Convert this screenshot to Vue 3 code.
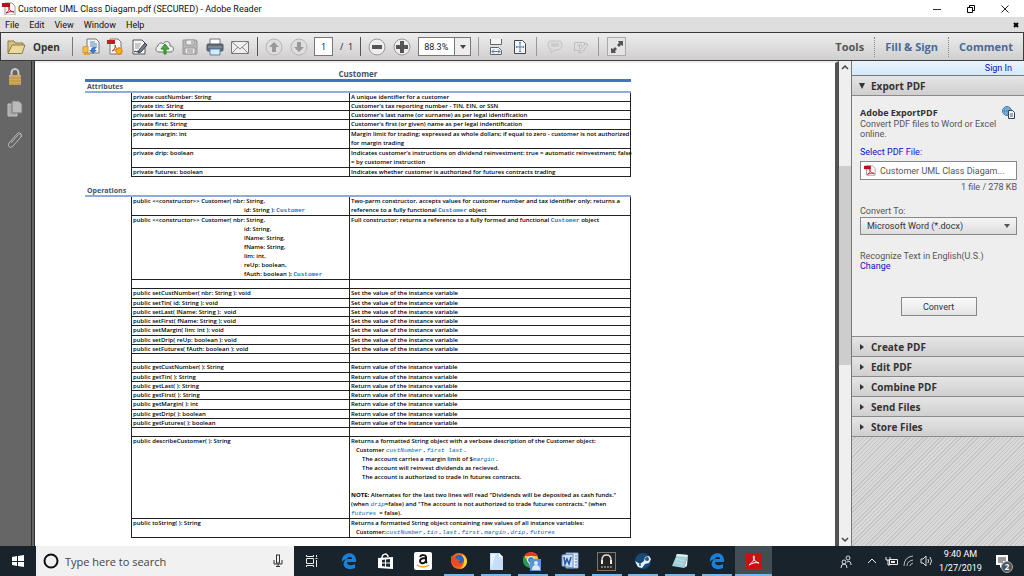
<script setup>
const menus = ['File', 'Edit', 'View', 'Window', 'Help']
const t = (text) => [{ text }]
const code = (text) => ({ text, kind: 'code' })
const v = (text) => ({ text, kind: 'var' })
const p = (text) => ({ text })

const attributes = [
  ['private custNumber: String', ['A unique identifier for a customer']],
  ['private tin: String', ["Customer's tax reporting number - TIN, EIN, or SSN"]],
  ['private last: String', ["Customer's last name (or surname) as per legal identification"]],
  ['private first: String', ["Customer's first (or given) name as per legal indentification"]],
  ['private margin: int', ['Margin limit for trading; expressed as whole dollars; if equal to zero - customer is not authorized', 'for margin trading']],
  ['private drip: boolean', ["Indicates customer's instructions on dividend reinvestment: true = automatic reinvestment; false", '= by customer instruction']],
  ['private futures: boolean', ['Indicates whether customer is authorized for futures contracts trading']]
]

const setters = ['setCustNumber( nbr: String ): void', 'setTin( id: String ): void', 'setLast( lName: String ):  void', 'setFirst( fName: String ): void', 'setMargin( lim: int ): void', 'setDrip( reUp: boolean ): void', 'setFutures( fAuth: boolean ): void']
const getters = ['getCustNumber( ): String', 'getTin( ): String', 'getLast( ): String', 'getFirst( ): String', 'getMargin( ): int', 'getDrip( ): boolean', 'getFutures( ): boolean']
const line = (parts, indent = 0) => ({ parts, indent })
const blank = { left: [line(t('\u00a0'))], right: [line(t('\u00a0'))] }

const operations = [
  {
    left: [line(t('public <<constructor>> Customer( nbr: String,')), line([p('id: String ): '), code('Customer')], 4)],
    right: [
      line(t('Two-parm constructor, accepts values for customer number and tax identifier only; returns a')),
      line([p('reference to a fully functional '), code('Customer'), p(' object')])
    ]
  },
  {
    left: [
      line(t('public <<constructor>> Customer( nbr: String,')),
      line(t('id: String,'), 4), line(t('lName: String,'), 4), line(t('fName: String,'), 4),
      line(t('lim: int,'), 4), line(t('reUp: boolean,'), 4),
      line([p('fAuth: boolean ): '), code('Customer')], 4)
    ],
    right: [line([p('Full constructor; returns a reference to a fully formed and functional '), code('Customer'), p(' object')])]
  },
  blank,
  ...setters.map((s) => ({ left: [line(t('public ' + s))], right: [line(t('Set the value of the instance variable'))] })),
  blank,
  ...getters.map((s) => ({ left: [line(t('public ' + s))], right: [line(t('Return value of the instance variable'))] })),
  blank,
  {
    left: [line(t('public describeCustomer( ): String'))],
    right: [
      line(t('Returns a formatted String object with a verbose description of the Customer object:')),
      line([p('Customer '), v('custNumber'), p(' , '), v('first last'), p(' .')], 1),
      line([p('The account carries a margin limit of $'), v('margin'), p(' .')], 2),
      line(t('The account will reinvest dividends as recieved.'), 2),
      line(t('The account is authorized to trade in futures contracts.'), 2),
      line(t('\u00a0')),
      line([{ text: 'NOTE:', kind: 'note' }, p(' Alternates for the last two lines will read "Dividends will be deposited as cash funds."')]),
      line([p('(when '), v('drip'), p('=false) and "The account is not authorized to trade futures contracts." (when')]),
      line([v('futures'), p('  = false).')])
    ]
  },
  {
    left: [line(t('public toString( ): String'))],
    right: [
      line(t('Returns a formatted String object containing raw values of all instance variables:')),
      line([p('Customer:'), v('custNumber'), p(' , '), v('tin'), p(' , '), v('last'), p(' , '), v('first'), p(' , '), v('margin'), p(' , '), v('drip'), p(' , '), v('futures')], 1)
    ]
  }
]

const tables = [
  { title: 'Attributes', rows: attributes.map(([l, r]) => ({ left: [line(t(l))], right: r.map((x) => line(t(x))) })) },
  { title: 'Operations', rows: operations }
]
const single = (row) => row.left.length === 1 && row.right.length === 1
const sections = ['Create PDF', 'Edit PDF', 'Combine PDF', 'Send Files', 'Store Files']
</script>

<template>
  <div class="desktop">
    <header class="title-bar">
      <svg class="pdf-icon" width="14" height="13" viewBox="0 0 14 13"><path d="M3 1h7l3 3v9H3z" fill="#fff" stroke="#999" /><path d="M0 1h8v4H0z" fill="#b5121b" /><path d="M4 11c3-2 4-5 3-6s-1 4 5 5c-3-1-5 0-8 1z" fill="none" stroke="#c4161c" /></svg>
      <h1>Customer UML Class Diagam.pdf (SECURED) - Adobe Reader</h1>
      <div class="win-buttons">
        <button aria-label="Minimize"><svg width="10" height="10"><path d="M1 5.500h8" stroke="#333" /></svg></button>
        <button aria-label="Restore"><svg width="10" height="10" fill="none" stroke="#000"><path d="M1.500 3.500h5v5h-5zM3.500 3V1.500h5v5H7" /></svg></button>
        <button aria-label="Close"><svg width="10" height="10" fill="none" stroke="#222"><path d="M1.500 1.500l7 7m0-7l-7 7" /></svg></button>
      </div>
    </header>

    <nav class="menu-bar">
      <button v-for="m in menus" :key="m">{{ m }}</button>
      <button class="close-doc" aria-label="Close document"><svg width="6" height="6"><path d="M1 1l4 4m0-4l-4 4" stroke="#000" stroke-width="2" /></svg></button>
    </nav>

    <div class="toolbar">
      <button class="open">
        <svg width="20" height="16" viewBox="0 0 20 16"><path d="M1 14V2h6l1 2h8v3" fill="#d9c486" stroke="#8d7b43" /><path d="M1 14.500L5 6h13l-3 8.500z" fill="#ecd99c" stroke="#8d7b43" /></svg>
        <span>Open</span>
      </button>
      <i class="sep first"></i>
      <div class="tools">
        <button aria-label="Convert file"><svg width="18" height="18" viewBox="0 0 18 18"><path d="M5 1h9l3 3v11H5z" fill="#f4f6f8" stroke="#777" /><path d="M8 4h5M8 6h7M8 8h7" stroke="#5b82b8" /><path d="M12 9c-2 0-3 1-3 3H7l4 4 4-4h-2c0-1 1-3 3-3z" fill="#3d79c4" /><path d="M1 9l5-1v6l-5 1z" fill="#f5c04b" stroke="#d9942b" /><path d="M2 16h6" stroke="#e3a334" stroke-width="2" /></svg></button>
        <button aria-label="Create PDF"><svg width="18" height="18" viewBox="0 0 18 18"><path d="M4 1h8l3 3v12H4z" fill="#f6f6f6" stroke="#777" /><path d="M1 2h8v4H1z" fill="#d0161f" /><path d="M6 13c3-2 4-5 3-6 0 3 2 4 5 4-3 0-6 1-8 2z" fill="none" stroke="#c8413f" /><path d="M13 9l1 2 2-1-1 2 2 1-2 1 1 2-2-1-1 2-1-2-2 1 1-2-2-1 2-1-1-2 2 1z" fill="#f5b324" stroke="#da901b" /></svg></button>
        <button aria-label="Edit"><svg width="18" height="18" viewBox="0 0 18 18"><path d="M2 2h9l3 3v11H2z" fill="#f7f7f7" stroke="#555" /><path d="M4 6h6M4 8h5M4 10h4" stroke="#999" /><path d="M14 5l2 2-6 7-3 1 1-3z" fill="#71808f" stroke="#37414c" /><path d="M3 14c2-2 2 1 4-1" fill="none" stroke="#222" /></svg></button>
        <button aria-label="Upload"><svg width="20" height="18" viewBox="0 0 20 18"><path d="M4 14c-4 0-4-5-1-6 0-3 4-4 5-2 2-4 8-3 7 2 5 0 4 6 1 6z" fill="#eee" stroke="#737373" /><path d="M10 6l4 5h-3v5H9v-5H6z" fill="#49ae39" stroke="#2f842b" /></svg></button>
        <button aria-label="Save"><svg width="18" height="18" viewBox="0 0 18 18"><path d="M2 2h13l1 1v13H2z" fill="#b9b9b9" stroke="#969696" /><path d="M5 2h8v5H5zM4 10h10v6H4z" fill="#ececec" stroke="#999" /><path d="M11 3v3M6 12h6M6 14h6" stroke="#888" /></svg></button>
        <button aria-label="Print"><svg width="18" height="18" viewBox="0 0 18 18"><path d="M4 1h10v7H4z" fill="#fff" stroke="#777" /><rect x="1" y="6" width="16" height="7" rx="1" fill="#626a74" stroke="#505860" /><path d="M2 9h14" stroke="#9aa6b4" /><path d="M4 11h10v6H4z" fill="#d5eaff" stroke="#5283b5" /></svg></button>
        <button aria-label="Mail"><svg width="20" height="18" viewBox="0 0 20 18"><path d="M1.500 3.500h17v12h-17z" fill="#eee" stroke="#777" /><path d="M2 4l8 7 8-7M2 15l6-6m10 6l-6-6" fill="none" stroke="#888" /></svg></button>
      </div>
      <i class="sep dark"></i>
      <button class="round" aria-label="Previous page"><svg width="18" height="18"><circle cx="9" cy="9" r="8" fill="#dedede" stroke="#b5b5b5" /><path d="M9 4l5 5h-3v5H7V9H4z" fill="#999" /></svg></button>
      <button class="round" aria-label="Next page"><svg width="18" height="18"><circle cx="9" cy="9" r="8" fill="#dedede" stroke="#b5b5b5" /><path d="M9 14l5-5h-3V4H7v5H4z" fill="#999" /></svg></button>
      <label class="page-no"><input aria-label="Page" value="1" /><span>/&nbsp;&nbsp;1</span></label>
      <i class="sep dark"></i>
      <button class="round" aria-label="Zoom out"><svg width="18" height="18"><circle cx="9" cy="9" r="8" fill="#eee" stroke="#999" /><path d="M4 7h10v4H4z" fill="#555" /></svg></button>
      <button class="round" aria-label="Zoom in"><svg width="18" height="18"><circle cx="9" cy="9" r="8" fill="#eee" stroke="#999" /><path d="M7 3h4v4h4v4h-4v4H7v-4H3V7h4z" fill="#555" /></svg></button>
      <div class="zoom">
        <input aria-label="Zoom level" value="88.3%" />
        <button aria-label="Zoom levels"><svg width="6" height="4"><path d="M0 0h6L3 4z" fill="#444" /></svg></button>
      </div>
      <i class="sep"></i>
      <button class="fit" aria-label="Fit width"><svg width="14" height="16" viewBox="0 0 14 16"><path d="M1.500 0v5.500h11V0M1.500 15.500v-7h8l3 3v4z" fill="#f5f5f5" stroke="#666" /><path d="M3 12.500h8M5 10.500l-2 2 2 2m4-4l2 2-2 2" fill="none" stroke="#5578b5" /></svg></button>
      <button class="fit" aria-label="Fit page"><svg width="14" height="16" viewBox="0 0 14 16"><path d="M1.500 1.500h8l3 3v10h-11z" fill="#f5f5f5" stroke="#444" /><path d="M7 3v10M3 8h8M6 4l1-1 1 1M6 12l1 1 1-1M4 7L3 8l1 1m6-2l1 1-1 1" fill="none" stroke="#5b7fb9" /></svg></button>
      <i class="sep"></i>
      <button class="fit" aria-label="Add note"><svg width="16" height="14" viewBox="0 0 16 14"><path d="M3 1h10q2 0 2 4t-5 5H7l-3 3V9Q1 9 1 5t2-4z" fill="#ddd" stroke="#c2c2c2" /><path d="M4 4h8M4 6h8" stroke="#bbb" /></svg></button>
      <button class="fit" aria-label="Highlight text"><svg width="16" height="14" viewBox="0 0 16 14"><path d="M1.500 2.500h10v8h-10zM4 5h5M6.500 5v4" fill="none" stroke="#bebebe" /><path d="M13 3l2 2-6 7-3 1 1-3z" fill="#ddd" stroke="#bbb" /></svg></button>
      <i class="sep"></i>
      <button class="expand" aria-label="Read mode"><svg width="14" height="14" viewBox="0 0 14 14"><path d="M8 1h5v5l-2-1-2 2-2-2 2-2zM1 8l2 1 2-2 2 2-2 2 1 2H1z" fill="#555" /></svg></button>
      <div class="task-tabs">
        <button class="active">Tools</button><button>Fill &amp; Sign</button><button>Comment</button>
      </div>
    </div>

    <div class="workspace">
      <aside class="nav-pane">
        <button aria-label="Security settings"><svg width="14" height="18" viewBox="0 0 14 18"><path d="M3.500 9V5a3.500 4 0 0 1 7 0v4" fill="none" stroke="#ccc" stroke-width="2" /><rect x="1" y="7" width="12" height="10" fill="#d3aa5d" /><path d="M1 10h12M1 13h12M1 16h12" stroke="#b38f4c" /></svg></button>
        <button aria-label="Page thumbnails"><svg width="16" height="17" viewBox="0 0 16 17"><path d="M1 4h9v12H1z" fill="#aaa" stroke="#c4c4c4" /><path d="M5 1h7l3 3v9H5z" fill="#bababa" stroke="#777" /></svg></button>
        <button aria-label="Attachments"><svg width="16" height="18" viewBox="0 0 16 18"><path d="M4 12l7-8c2-2 4 0 3 2l-8 9c-3 3-6 0-4-3l8-9c2-3 6 0 4 3" fill="none" stroke="#b9b9b9" /></svg></button>
      </aside>

      <main class="document">
        <article class="sheet">
          <h2>Customer</h2>
          <section v-for="tb in tables" :key="tb.title" :class="tb.title.toLowerCase()">
            <h3>{{ tb.title }}</h3>
            <table>
              <colgroup><col class="c1" /><col /></colgroup>
              <tbody>
                <tr v-for="(row, i) in tb.rows" :key="i" :class="{ single: single(row) }">
                  <td v-for="(cell, j) in [row.left, row.right]" :key="j">
                    <div v-for="(ln, k) in cell" :key="k" :class="'in' + ln.indent"><span v-for="(part, n) in ln.parts" :key="n" :class="part.kind">{{ part.text }}</span></div>
                  </td>
                </tr>
              </tbody>
            </table>
          </section>
        </article>
      </main>

      <div class="scrollbar">
        <svg width="12" height="14"><path d="M3 8l3-3 3 3" fill="none" stroke="#444" stroke-width="1.500" /></svg>
        <div class="thumb"></div>
        <svg width="12" height="14"><path d="M3 6l3 3 3-3" fill="none" stroke="#444" stroke-width="1.500" /></svg>
      </div>

      <aside class="side">
        <div class="sign-in"><a href="#">Sign In</a></div>
        <button class="acc"><svg width="6" height="6"><path d="M0 0h6L3 6z" fill="#333" /></svg>Export PDF</button>
        <form class="export" @submit.prevent>
          <div class="export-head">
            <h4>Adobe ExportPDF</h4>
            <svg width="13" height="13" viewBox="0 0 13 13"><circle cx="5" cy="5" r="4.500" fill="#9cc6e8" stroke="#3a79ae" /><path d="M1 5h8M5 1v8M3 2q-1 3 0 6M7 2q1 3 0 6" fill="none" stroke="#4d88b8" /><path d="M6.500 4.500h4l2 2v6h-6z" fill="#f4f4f4" stroke="#345" /><path d="M8 8h3M8 10h3" stroke="#346da5" /></svg>
          </div>
          <p>Convert PDF files to Word or Excel<br />online.</p>
          <a class="select-file" href="#">Select PDF File:</a>
          <div class="file">
            <svg width="12" height="13" viewBox="0 0 14 13"><path d="M3 1h7l3 3v8H3z" fill="#fff" stroke="#999" /><path d="M0 1h8v4H0z" fill="#b5121b" /><path d="M4 11c3-2 4-5 3-6s-1 4 5 5c-3-1-5 0-8 1z" fill="none" stroke="#c4161c" /></svg>
            <span>Customer UML Class Diagam...</span>
          </div>
          <div class="size">1 file / 278 KB</div>
          <label for="fmt">Convert To:</label>
          <div class="select-wrap">
            <select id="fmt"><option>Microsoft Word (*.docx)</option></select>
            <svg width="6" height="4"><path d="M0 0h6L3 4z" fill="#555" /></svg>
          </div>
          <div class="ocr">Recognize Text in English(U.S.)<br /><a href="#">Change</a></div>
          <button class="convert">Convert</button>
        </form>
        <button v-for="s in sections" :key="s" class="acc"><svg width="6" height="6"><path d="M1 0v6l4-3z" fill="#333" /></svg>{{ s }}</button>
        <div class="hatch"></div>
      </aside>
    </div>

    <footer class="taskbar">
      <button class="start" aria-label="Start"><svg width="12" height="12" viewBox="0 0 12 12"><path d="M0 2l5-1v5H0zM6 1l6-1v6H6zM0 7h5v4l-5-1zM6 7h6v5l-6-1z" fill="#fff" /></svg></button>
      <label class="search">
        <svg width="16" height="16"><circle cx="8" cy="8" r="6.500" fill="none" stroke="#111" stroke-width="2" /></svg>
        <input placeholder="Type here to search" aria-label="Search" />
        <svg width="10" height="14" viewBox="0 0 10 14"><rect x="3.500" y="1" width="3" height="8" fill="none" stroke="#333" /><path d="M1 6v4h8V6M5 10v3M3 12.500h4" fill="none" stroke="#333" /></svg>
      </label>
      <div class="apps">
        <button aria-label="Task view"><svg width="14" height="14" viewBox="0 0 14 14"><path d="M1.500 1v1.500h7V1M1.500 4.500h7v5h-7zM1.500 13v-1.500h7V13M11.500 1v2m0 3v7M10.500 4.500h2" fill="none" stroke="#eee" /></svg></button>
        <button aria-label="Edge"><svg width="16" height="16" viewBox="0 0 16 16"><path d="M1 7C2-2 15-2 15 7v2H6c0 4 5 4 8 2v4C7 18 1 14 3 9c1-2 2-3 4-3-1 0-4 0-6 3zM6 6h5c0-3-4-3-5 0z" fill="#1681dc" /></svg></button>
        <button aria-label="Store"><svg width="17" height="17" viewBox="0 0 17 17"><path d="M1 5l15-1v12l-15-1z" fill="#fff" /><path d="M5 5c0-5 6-5 6-1" fill="none" stroke="#fff" stroke-width="1.500" /><path d="M5 7l3-.500v3H5zM9 6.500l4-.500v3.500H9zM5 10.500h3v3l-3-.500zM9 10.500h4V14l-4-.500z" fill="#1a2730" /></svg></button>
        <button aria-label="Amazon"><svg width="18" height="18" viewBox="0 0 18 18"><rect width="18" height="18" rx="2" fill="#fff" /><path d="M6 5c1-3 6-2 6 0v5l1 1M12 6c-4 0-6 1-6 3s3 4 6 0" fill="none" stroke="#111" stroke-width="2" /><path d="M3 13q6 4 12 0" fill="none" stroke="#f39a1e" stroke-width="1.500" /></svg></button>
        <button class="run" aria-label="Firefox"><svg width="18" height="18" viewBox="0 0 18 18"><circle cx="9" cy="9" r="8" fill="#f36b21" /><path d="M12 2q5 3 5 8-1 6-7 7 5-4 3-8z" fill="#ffcf32" /><circle cx="9" cy="8" r="5" fill="#2862c3" /><path d="M1 4c3 0 5 1 6 3l3 1-2 2c2 2 4 1 6-1-1 7-11 8-13 0z" fill="#ee4a22" /></svg></button>
        <button class="run" aria-label="Document"><svg width="14" height="17" viewBox="0 0 14 17"><path d="M1 0h9l4 4v13H1z" fill="#c4ddf8" /><path d="M10 0v4h4z" fill="#fff" /><path d="M2 16V1h5z" fill="#e4f1ff" /></svg></button>
        <button class="run" aria-label="Chrome"><svg width="19" height="19" viewBox="0 0 19 19"><circle cx="8" cy="8" r="7.500" fill="#f2c32e" /><path d="M1 4a8 8 0 0 1 14 0H8z" fill="#df3c31" /><path d="M1 4l5 7 1 5A8 8 0 0 1 1 4z" fill="#269b50" /><circle cx="8" cy="8" r="3.500" fill="#3c78d6" stroke="#fff" /><path d="M7 7h11v12H7z" fill="#5d91d8" /><circle cx="13" cy="11" r="2" fill="#d9e8fb" /><path d="M9 18q0-5 4-5t4 5z" fill="#d9e8fb" /></svg></button>
        <button class="run" aria-label="Word"><svg width="18" height="18" viewBox="0 0 18 18"><path d="M5 1h12v15H5z" fill="#e8f0fb" stroke="#8aa8d0" /><path d="M14 4h2m-2 3h2m-2 3h2m-2 3h2" stroke="#386fba" /><path d="M1 3l11-1v14L1 14z" fill="#cfdff4" stroke="#5f8ac6" /><path d="M3 5l1 7 2-5 2 5 2-7" fill="none" stroke="#2457a5" stroke-width="1.500" /></svg></button>
        <button class="run" aria-label="Headphones"><svg width="19" height="19" viewBox="0 0 19 19"><rect x=".5" y=".5" width="18" height="18" fill="#252525" stroke="#777" /><path d="M5 12V8q0-5 4.500-5T14 8v4" fill="none" stroke="#ddd" stroke-width="1.500" /><path d="M4 8h2v4H4zM13 8h2v4h-2z" fill="#eee" /><path d="M4 15h11" stroke="#ccc" stroke-dasharray="2 1" /></svg></button>
        <button class="run" aria-label="Steam"><svg width="18" height="18" viewBox="0 0 18 18"><circle cx="9" cy="9" r="8" fill="#174a79" /><path d="M1 9l5 3 4-3 1-4 4-1 2 3-2 4-4 1-3 4-4-1z" fill="#e9f1f8" /><circle cx="13" cy="7" r="2" fill="#245783" /><circle cx="6" cy="13" r="1" fill="#245783" /></svg></button>
        <button class="run" aria-label="Notepad"><svg width="18" height="18" viewBox="0 0 18 18"><path d="M6 2l11 1-4 13-12-2z" fill="#9fd1d9" /><path d="M17 3l-1 11-3 2z" fill="#eee" /><path d="M6 2l11 1-1 2L5 4z" fill="#e5eeee" /><path d="M5 7l8 2M4 10l8 2" stroke="#bde2e7" /></svg></button>
        <button class="run" aria-label="Edge window"><svg width="16" height="16" viewBox="0 0 16 16"><path d="M1 7C2-2 15-2 15 7v2H6c0 4 5 4 8 2v4C7 18 1 14 3 9c1-2 2-3 4-3-1 0-4 0-6 3zM6 6h5c0-3-4-3-5 0z" fill="#1681dc" /></svg></button>
        <button class="run current" aria-label="Adobe Reader"><svg width="16" height="16" viewBox="0 0 16 16"><path d="M0 0h16v16H0z" fill="#c9110f" /><path d="M3 12c5-3 6-8 5-9s-2 5 5 7c-3-1-7 0-10 2z" fill="none" stroke="#fff" /></svg></button>
      </div>
      <div class="tray">
        <svg width="12" height="13" viewBox="0 0 12 13" fill="none" stroke="#ddd"><circle cx="8" cy="3" r="2" /><circle cx="4" cy="7" r="2" /><path d="M1 13q0-4 3-4t3 4M7 7q4-2 4 3" /></svg>
        <svg class="chev" width="10" height="8"><path d="M1 6l4-4 4 4" fill="none" stroke="#eee" /></svg>
        <svg width="13" height="11" viewBox="0 0 13 11"><path d="M4.500 3.500h8v5h-8z" fill="none" stroke="#eee" /><path d="M1 1v3h4V1M3 4v5h2" fill="none" stroke="#eee" /><path d="M6 5h4v2H6z" fill="#eee" /></svg>
        <svg width="12" height="12" viewBox="0 0 12 12" fill="none" stroke="#bbb"><path d="M1 11Q1 2 10 1M4 11q0-5 6-6M7 11q0-2 3-3" /></svg>
        <svg width="12" height="12" viewBox="0 0 12 12" fill="none" stroke="#ddd"><path d="M1 4h2l3-3v10L3 8H1zM8 4q1 2 0 4M10 2q3 4 0 8" /></svg>
      </div>
      <div class="clock">9:40 AM<br />1/27/2019</div>
      <button class="notif" aria-label="Notifications"><svg width="14" height="14" viewBox="0 0 14 14"><path d="M1 1h12v10H8l-3 3v-3H1z" fill="#fff" /><path d="M3 4h8M3 6h8M3 8h5" stroke="#333" /></svg><b>2</b></button>
    </footer>
  </div>
</template>

<style>
body { overflow: hidden; }
</style>

<style scoped>
* { box-sizing: border-box; }
.desktop { display: flex; flex-direction: column; height: 100vh; overflow: hidden; font-family: "Open Sans", "Noto Sans", sans-serif; font-size: 9px; color: #222; background: #fff; }
button { border: 0; padding: 0; margin: 0; background: none; font: inherit; color: inherit; display: flex; align-items: center; }
input, select { font: inherit; color: inherit; min-width: 0; }
svg { display: block; flex: none; }
h1, h2, h3, h4, p { margin: 0; }
a { text-decoration: none; color: #1010c8; }
.title-bar { display: flex; align-items: center; height: 17px; padding-left: 2px; background: #fff; flex: none; }
.title-bar h1 { font-family: Roboto, sans-serif; font-size: 9px; font-weight: 400; margin-left: 2px; color: #111; }
.win-buttons { margin-left: auto; display: flex; gap: 24px; padding-right: 14px; }
.menu-bar { display: flex; align-items: center; gap: 10px; height: 15px; padding: 0 5px; font-family: Roboto, sans-serif; background: #dedede; color: #111; flex: none; }
.close-doc { margin-left: auto; }
.toolbar { display: flex; align-items: center; height: 29px; border: 1px solid #3c3a3c; background: linear-gradient(#ededed, #cfcfcf); flex: none; }
.open { width: 57px; padding-left: 6px; gap: 6px; font-weight: 700; font-size: 10px; color: #333; }
.sep { width: 1px; height: 19px; background: #999; flex: none; }
.sep.first { margin-left: 14px; background: #777; }
.sep.dark { background: #555; }
.tools { display: flex; align-items: center; justify-content: space-between; width: 168px; margin: 0 7px 0 9px; }
.round { margin-left: 7px; }
.page-no { display: flex; align-items: center; gap: 7px; margin: 0 7px 0 6px; }
.page-no input { width: 19px; height: 19px; border: 1px solid #777; padding: 0; text-align: center; background: #fff; }
.zoom { display: flex; height: 19px; width: 53px; margin: 0 7px; border: 1px solid #777; background: #fff; }
.zoom input { flex: 1; width: 30px; border: 0; padding: 0 0 0 5px; background: none; font-family: Roboto, sans-serif; }
.zoom button { width: 16px; justify-content: center; border-left: 1px solid #777; background: #eee; }
.fit { margin: 0 0 0 10px; }
.fit + .sep { margin-left: 9px; }
.expand { width: 19px; height: 19px; margin-left: 8px; justify-content: center; border: 1px solid #aaa; background: #e4e4e4; }
.task-tabs { margin-left: auto; display: flex; }
.task-tabs button { height: 20px; padding: 0 10px; font-weight: 700; font-size: 11px; color: #4b6a94; border-left: 1px dotted #888; }
.task-tabs .active { color: #555; border-left: 0; }

.workspace { flex: 1; min-height: 0; display: flex; }
.nav-pane { width: 35px; flex: none; background: #666; border-right: 4px double #2d2d2d; display: flex; flex-direction: column; align-items: center; gap: 14px; padding: 7px 2px 0 0; }
.document { flex: 1; min-width: 0; overflow: hidden; border-right: 4px solid #535353; background: #fff; border-top: 2px solid #f0ecef; }
.sheet { width: 596px; padding: 6px 0 0 50px; font-size: 6px; color: #000; }
.sheet h2 { font-size: 8px; line-height: 10px; font-weight: 700; text-align: center; color: #44546a; border-bottom: 3px solid #4472c4; }
.sheet h3 { font-size: 7px; line-height: 9px; font-weight: 700; color: #44546a; padding-left: 2px; border-bottom: 2px solid #8faadc; }
.sheet table { width: 500px; margin-left: 46px; border-collapse: collapse; table-layout: fixed; }
.operations { margin-top: 9px; }
.c1 { width: 218px; }
td { border: 1px solid #222; padding: 0 0 0 1px; line-height: 9px; vertical-align: top; white-space: pre; font-weight: 600; }
tr:first-child td { border-top: 0; }
.single td { line-height: 8px; }
.single:nth-child(4n) td { line-height: 9px; }
.in1 { padding-left: 5px; }
.in2 { padding-left: 11px; }
.in4 { padding-left: 111px; }
.code { font-family: "Liberation Mono", monospace; font-weight: 700; color: #1f74c4; }
.var { font-family: "Liberation Mono", monospace; font-weight: 400; font-style: italic; color: #0563c1; }
.note { font-weight: 700; }

.scrollbar { width: 12px; flex: none; background: #efefef; display: flex; flex-direction: column; }
.thumb { flex: none; height: 41%; margin: 91px 0 auto; background: #cdcdcd; }
.side { width: 173px; flex: none; display: flex; flex-direction: column; border-left: 1px solid #777; background: #eee; font-family: Roboto, sans-serif; }
.sign-in { height: 15px; line-height: 14px; text-align: right; padding-right: 12px; background: linear-gradient(#eaf5fd, #d5e9fa); border-bottom: 1px solid #777; flex: none; }
.acc { height: 20px; flex: none; gap: 6px; padding-left: 7px; font-family: "Open Sans", sans-serif; font-size: 10px; font-weight: 700; color: #333; background: linear-gradient(#e5e5e5, #cfcfcf); border-bottom: 1px solid #8b8b8b; }
.export { height: 241px; flex: none; padding: 10px 7px 0 8px; border-bottom: 1px solid #8b8b8b; display: flex; flex-direction: column; color: #555; line-height: 10px; }
.export-head { display: flex; justify-content: space-between; align-items: center; padding-right: 2px; }
.export h4 { font-family: "Open Sans", sans-serif; font-size: 9px; color: #333; }
.select-file { margin-top: 8px; }
.file { display: flex; gap: 4px; align-items: center; height: 19px; margin-top: 4px; padding-left: 3px; background: #fff; border: 1px solid #888; }
.size { text-align: right; margin-top: 2px; }
.export label { margin-top: 14px; }
.select-wrap { display: grid; align-items: center; margin-top: 1px; }
.select-wrap > * { grid-area: 1 / 1; }
.select-wrap svg { justify-self: end; margin-right: 7px; pointer-events: none; }
.select-wrap select { appearance: none; height: 18px; border: 1px solid #888; border-radius: 0; padding: 0 6px; background: linear-gradient(#f5f5f5, #ddd); color: #333; }
.ocr { margin-top: 16px; line-height: 10px; }
.convert { align-self: center; justify-content: center; width: 76px; height: 19px; margin-top: 26px; border: 1px solid #888; background: linear-gradient(#fafafa, #e4e4e4); color: #333; }
.hatch { flex: 1; background: repeating-linear-gradient(135deg, #d9d9d9 0 2px, #c4c4c4 2px 3px); }

.taskbar { height: 30px; flex: none; display: flex; align-items: stretch; background: #18232b; color: #fff; }
.start { width: 36px; justify-content: center; }
.search { width: 258px; display: flex; align-items: center; gap: 6px; padding: 0 11px 0 7px; background: #f1f1f1; }
.search input { flex: 1; border: 0; background: none; padding: 0; font-size: 11px; }
.search input::placeholder { color: #444; opacity: 1; }
.apps { display: flex; width: 478px; }
.apps button { flex: 1; justify-content: center; }
.apps .run { background: linear-gradient(#76b9ed, #76b9ed) bottom / 30px 2px no-repeat; }
.apps .current { background-color: #424d56; background-size: 100% 2px; }
.tray { margin-left: auto; display: flex; align-items: center; gap: 5px; margin-right: 1px; }
.tray .chev { margin: 0 3px 0 10px; }
.clock { width: 55px; text-align: center; align-self: center; line-height: 14px; font-family: Roboto, sans-serif; font-size: 9px; }
.notif { width: 36px; padding-right: 8px; justify-content: center; position: relative; }
.notif b { position: absolute; right: 11px; bottom: 3px; width: 12px; height: 12px; border-radius: 6px; background: #4c555c; border: 1px solid #aaa; font-size: 8px; line-height: 10px; text-align: center; }
</style>
